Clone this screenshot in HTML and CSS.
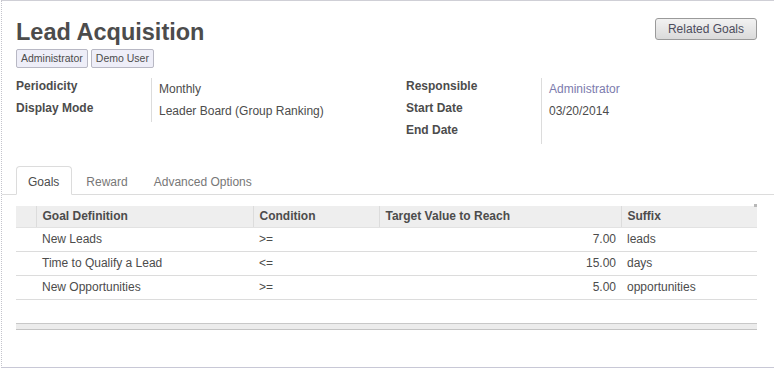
FILE: index.html
```html
<!DOCTYPE html>
<html lang="en">
<head>
    <meta charset="UTF-8">
    <title>Lead Acquisition</title>
    <link rel="stylesheet" href="styles.css">
</head>
<body>
    <div class="sheet">
        <!-- Title + button -->
        <div class="sheet-head">
            <div class="title-block">
                <h1 class="title">Lead Acquisition</h1>
                <div class="tags">
                    <span class="tag">Administrator</span>
                    <span class="tag">Demo User</span>
                </div>
            </div>
            <button class="btn">Related Goals</button>
        </div>

        <!-- Fields -->
        <div class="fields">
            <div class="group">
                <div class="label">Periodicity</div>
                <div class="value">Monthly</div>
                <div class="label">Display Mode</div>
                <div class="value">Leader Board (Group Ranking)</div>
            </div>
            <div class="group">
                <div class="label">Responsible</div>
                <div class="value"><a href="#" class="link">Administrator</a></div>
                <div class="label">Start Date</div>
                <div class="value">03/20/2014</div>
                <div class="label">End Date</div>
                <div class="value"></div>
            </div>
        </div>

        <!-- Tabs -->
        <ul class="tabs">
            <li class="tab active">Goals</li>
            <li class="tab">Reward</li>
            <li class="tab">Advanced Options</li>
        </ul>

        <table class="goals">
            <colgroup>
                <col style="width: 20px">
                <col style="width: 217px">
                <col style="width: 126px">
                <col style="width: 242px">
                <col>
            </colgroup>
            <thead>
                <tr>
                    <th></th>
                    <th>Goal Definition</th>
                    <th>Condition</th>
                    <th>Target Value to Reach</th>
                    <th class="last">Suffix</th>
                </tr>
            </thead>
            <tbody>
                <tr>
                    <td></td>
                    <td>New Leads</td>
                    <td>&gt;=</td>
                    <td class="num">7.00</td>
                    <td>leads</td>
                </tr>
                <tr>
                    <td></td>
                    <td>Time to Qualify a Lead</td>
                    <td>&lt;=</td>
                    <td class="num">15.00</td>
                    <td>days</td>
                </tr>
                <tr>
                    <td></td>
                    <td>New Opportunities</td>
                    <td>&gt;=</td>
                    <td class="num">5.00</td>
                    <td>opportunities</td>
                </tr>
                <tr class="spacer">
                    <td colspan="5"></td>
                </tr>
            </tbody>
            <tfoot>
                <tr>
                    <td colspan="5"></td>
                </tr>
            </tfoot>
        </table>
    </div>
</body>
</html>
```

FILE: styles.css
```css
* {
    margin: 0;
    padding: 0;
    box-sizing: border-box;
}

body {
    font-family: "Liberation Sans", Arial, sans-serif;
    font-size: 12px;
    color: #4c4c4c;
    background-color: #fff;
}

/* Sheet */
.sheet {
    margin-left: 1px;
    height: 368px;
    border-top: 1px solid #cfcfd6;
    border-left: 1px dotted #c4c4cc;
    border-bottom: 1px solid #c8c8d6;
    padding: 0 17px 0 14px;
}

.sheet-head {
    display: flex;
    justify-content: space-between;
    align-items: flex-start;
    padding-top: 17px;
}

.title {
    font-size: 23.5px;
    line-height: 28px;
    font-weight: bold;
    color: #4c4c4c;
}

/* Tags */
.tags {
    display: flex;
    gap: 3px;
    margin-top: 3px;
}

.tag {
    font-size: 10.5px;
    line-height: 15px;
    padding: 1px 4px;
    background-color: #eeeef8;
    border: 1px solid #b8b8c4;
    border-radius: 2px;
}

/* Button */
.btn {
    font-family: inherit;
    font-size: 12px;
    line-height: 14px;
    color: #4c4c5c;
    padding: 3px 12px;
    background: linear-gradient(#f2f2f2, #dadada);
    border: 1px solid #9a9a9a;
    border-radius: 3px;
    cursor: pointer;
}

/* Fields */
.fields {
    display: grid;
    grid-template-columns: 390px 1fr;
    margin-top: 10px;
}

.group {
    display: grid;
    grid-template-columns: 135px 1fr;
    grid-auto-rows: 22px;
    align-content: start;
}

.label {
    font-weight: bold;
    line-height: 15px;
    padding-top: 1px;
}

.value {
    line-height: 15px;
    padding: 4px 7px 0;
    border-left: 1px solid #dcdcdc;
}

.link {
    color: #7c7bad;
    text-decoration: none;
}

/* Tabs */
.tabs {
    display: flex;
    list-style: none;
    margin: 22px -17px 0 -14px;
    padding-left: 14px;
    border-bottom: 1px solid #dcdcdc;
}

.tab {
    line-height: 18px;
    padding: 6px 11px 3px;
    margin-right: 2px;
    margin-bottom: -1px;
    border: 1px solid transparent;
    border-radius: 4px 4px 0 0;
    color: #777;
}

.tab:first-child {
    padding-right: 12px;
}

.tab.active {
    color: #4c4c4c;
    background-color: #fff;
    border-color: #dcdcdc #dcdcdc #fff;
}

/* Goals table */
.goals {
    width: 100%;
    table-layout: fixed;
    border-collapse: collapse;
    margin-top: 11px;
}

.goals th {
    position: relative;
    height: 21px;
    text-align: left;
    font-weight: bold;
    padding: 0 6px;
    background-color: #eeeeee;
    border-left: 1px solid #dcdcdc;
    border-bottom: 1px solid #e2e2e2;
}

.goals th:first-child {
    border-left: none;
}

.goals th.last::after {
    content: "";
    position: absolute;
    top: -2px;
    right: 0;
    width: 3px;
    height: 3px;
    background-color: #b8b8b8;
}

.goals td {
    height: 24px;
    padding: 0 6px;
    border-bottom: 1px solid #dcdcdc;
    white-space: nowrap;
}

.goals td.num {
    text-align: right;
    padding-right: 5px;
}

.goals .spacer td {
    border-bottom: none;
}

.goals tfoot td {
    height: 6px;
    padding: 0;
    background-color: #ececec;
    border-top: 1px solid #c8c8c8;
    border-bottom: 1px solid #c4c4c4;
}
```
